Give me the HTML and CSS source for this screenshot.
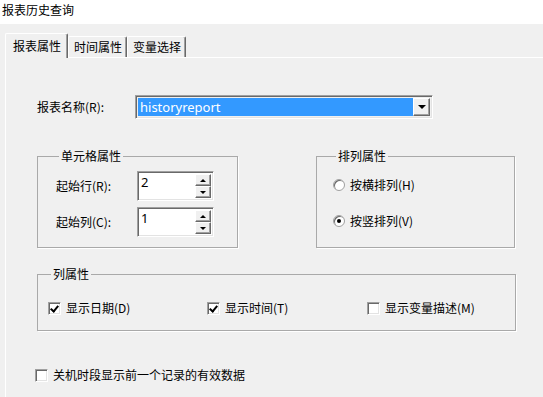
FILE: index.html
```html
<!DOCTYPE html>
<html lang="zh-CN">
<head>
    <meta charset="UTF-8">
    <title>报表历史查询</title>
    <link rel="stylesheet" href="styles.css">
</head>
<body>
    <div class="titlebar">报表历史查询</div>

    <div class="tabs">
        <div class="tab active">报表属性</div>
        <div class="tab">时间属性</div>
        <div class="tab">变量选择</div>
    </div>

    <div class="panel">
        <div class="name-row">
            <span class="name-label">报表名称(R):</span>
            <div class="combo">
                <span class="combo-value">historyreport</span>
                <span class="btn combo-btn"><i class="arrow-down"></i></span>
            </div>
        </div>

        <div class="groups">
            <fieldset class="group cell-group">
                <legend>单元格属性</legend>
                <div class="spin-row">
                    <span class="spin-label">起始行(R):</span>
                    <div class="spin">
                        <span class="spin-value">2</span>
                        <span class="spin-btns">
                            <span class="btn"><i class="arrow-up"></i></span>
                            <span class="btn"><i class="arrow-down"></i></span>
                        </span>
                    </div>
                </div>
                <div class="spin-row">
                    <span class="spin-label">起始列(C):</span>
                    <div class="spin">
                        <span class="spin-value">1</span>
                        <span class="spin-btns">
                            <span class="btn"><i class="arrow-up"></i></span>
                            <span class="btn"><i class="arrow-down"></i></span>
                        </span>
                    </div>
                </div>
            </fieldset>

            <fieldset class="group order-group">
                <legend>排列属性</legend>
                <label class="option"><span class="radio"></span>按横排列(H)</label>
                <label class="option"><span class="radio on"></span>按竖排列(V)</label>
            </fieldset>
        </div>

        <fieldset class="group column-group">
            <legend>列属性</legend>
            <div class="checks">
                <label class="option"><span class="check on"></span>显示日期(D)</label>
                <label class="option"><span class="check on"></span>显示时间(T)</label>
                <label class="option"><span class="check"></span>显示变量描述(M)</label>
            </div>
        </fieldset>

        <label class="option last-option"><span class="check"></span>关机时段显示前一个记录的有效数据</label>
    </div>
</body>
</html>
```

FILE: styles.css
```css
body {
    margin: 0;
    background: #f0f0f0;
    font-family: "Noto Sans CJK SC", "Noto Sans", sans-serif;
    font-size: 12px;
    line-height: 16px;
    color: #000;
    height: 397px;
    overflow: hidden;
}
.titlebar {
    height: 24px;
    background: #fff;
    padding: 2px 0 0 2px;
    box-sizing: border-box;
}
.tabs {
    display: flex;
    align-items: flex-end;
    height: 24px;
    margin-top: 9px;
    padding-left: 5px;
}
.tab {
    height: 21px;
    box-sizing: border-box;
    padding: 2px 4px 0 5px;
    border-top: 1px solid #fff;
    border-left: 1px solid #fff;
    border-right: 1px solid #696969;
    box-shadow: inset -1px 0 #a0a0a0;
    border-radius: 2px 2px 0 0;
}
.tab.active {
    height: 25px;
    margin-bottom: -1px;
    padding: 4px 6px 0 7px;
    position: relative;
    z-index: 1;
    background: #f0f0f0;
}
.panel {
    margin-left: 5px;
    height: 340px;
    box-sizing: border-box;
    border-top: 1px solid #fff;
    border-left: 1px solid #fff;
    padding: 37px 0 0 31px;
}
.name-row {
    display: flex;
    align-items: center;
    height: 24px;
}
.name-label {
    width: 98px;
}
.combo {
    width: 298px;
    height: 24px;
    box-sizing: border-box;
    display: flex;
    border-top: 1px solid #a0a0a0;
    border-left: 1px solid #a0a0a0;
    border-right: 1px solid #fff;
    border-bottom: 1px solid #fff;
    box-shadow: inset 1px 1px #696969, inset -1px -1px #e3e3e3;
    padding: 2px;
}
.combo-value {
    flex: 1;
    background: #3399ff;
    color: #fff;
    font-family: "Noto Sans", sans-serif;
    font-size: 13px;
    line-height: 19px;
    padding-left: 2px;
}
.btn {
    display: flex;
    align-items: center;
    justify-content: center;
    background: #f0f0f0;
    border-top: 1px solid #fff;
    border-left: 1px solid #fff;
    border-right: 1px solid #696969;
    border-bottom: 1px solid #696969;
    box-shadow: inset -1px -1px #a0a0a0;
    box-sizing: border-box;
}
.combo-btn {
    width: 17px;
}
.arrow-down,
.arrow-up {
    width: 0;
    height: 0;
    border-left: 3px solid transparent;
    border-right: 3px solid transparent;
}
.arrow-down {
    border-top: 3px solid #000;
}
.arrow-up {
    border-bottom: 3px solid #000;
}
.combo-btn .arrow-down {
    border-width: 4px 4px 0;
}
.groups {
    display: flex;
    gap: 78px;
    margin-top: 29px;
}
.group {
    margin: 0;
    border: 1px solid #a9a9a9;
    box-shadow: 1px 1px #fff;
    min-width: 0;
}
.group legend {
    padding: 0 2px;
    margin-left: 3px;
}
.cell-group {
    width: 201px;
    box-sizing: border-box;
    padding: 7px 0 10px 18px;
    display: flex;
    flex-direction: column;
    gap: 6px;
}
.spin-row {
    display: flex;
    align-items: center;
}
.spin-label {
    width: 81px;
}
.spin {
    width: 77px;
    height: 30px;
    box-sizing: border-box;
    display: flex;
    background: #fff;
    border-top: 1px solid #a0a0a0;
    border-left: 1px solid #a0a0a0;
    border-right: 1px solid #fff;
    border-bottom: 1px solid #fff;
    box-shadow: inset 1px 1px #696969, inset -1px -1px #e3e3e3;
    padding: 2px;
}
.spin-value {
    flex: 1;
    font-family: "Noto Sans", sans-serif;
    font-size: 13px;
    line-height: 16px;
    padding-left: 1px;
}
.spin-btns {
    width: 16px;
    display: flex;
    flex-direction: column;
}
.spin-btns .btn {
    flex: 1;
}
.order-group {
    width: 199px;
    box-sizing: border-box;
    padding: 13px 0 0 16px;
    display: flex;
    flex-direction: column;
    gap: 20px;
}
.option {
    display: flex;
    align-items: center;
    height: 16px;
}
.radio {
    width: 12px;
    height: 12px;
    box-sizing: border-box;
    border-radius: 50%;
    background: #fff;
    border: 1px solid #a0a0a0;
    box-shadow: inset 1px 1px #696969;
    margin-right: 5px;
    display: flex;
    align-items: center;
    justify-content: center;
}
.radio.on::after {
    content: "";
    width: 4px;
    height: 4px;
    border-radius: 50%;
    background: #000;
}
.check {
    width: 13px;
    height: 13px;
    box-sizing: border-box;
    background: #fff;
    border-top: 1px solid #a0a0a0;
    border-left: 1px solid #a0a0a0;
    border-right: 1px solid #fff;
    border-bottom: 1px solid #fff;
    box-shadow: inset 1px 1px #696969, inset -1px -1px #e3e3e3;
    margin-right: 5px;
    position: relative;
}
.check.on::after {
    content: "";
    position: absolute;
    left: 3px;
    top: 1px;
    width: 3px;
    height: 6px;
    border-right: 2px solid #000;
    border-bottom: 2px solid #000;
    transform: rotate(40deg);
}
.column-group {
    width: 479px;
    box-sizing: border-box;
    margin-top: 18px;
    padding: 18px 0 14px 10px;
}
.checks {
    display: grid;
    grid-template-columns: 159px 160px auto;
}
.last-option {
    margin: 36px 0 0 -2px;
}
```
